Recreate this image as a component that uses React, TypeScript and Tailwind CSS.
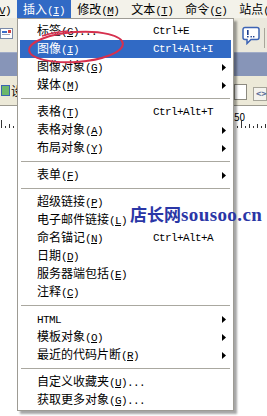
import { clsx } from "clsx";

type Entry =
    | { sep: true }
    | {
          sep?: false;
          zh?: string;
          latin?: string;
          k?: string;
          dots?: boolean;
          shortcut?: string;
          arrow?: boolean;
          active?: boolean;
      };

const entries: Entry[] = [
    { zh: "标签", k: "G", dots: true, shortcut: "Ctrl+E" },
    { zh: "图像", k: "I", shortcut: "Ctrl+Alt+I", active: true },
    { zh: "图像对象", k: "G", arrow: true },
    { zh: "媒体", k: "M", arrow: true },
    { sep: true },
    { zh: "表格", k: "T", shortcut: "Ctrl+Alt+T" },
    { zh: "表格对象", k: "A", arrow: true },
    { zh: "布局对象", k: "Y", arrow: true },
    { sep: true },
    { zh: "表单", k: "F", arrow: true },
    { sep: true },
    { zh: "超级链接", k: "P" },
    { zh: "电子邮件链接", k: "L" },
    { zh: "命名锚记", k: "N", shortcut: "Ctrl+Alt+A" },
    { zh: "日期", k: "D" },
    { zh: "服务器端包括", k: "E" },
    { zh: "注释", k: "C" },
    { sep: true },
    { latin: "HTML", arrow: true },
    { zh: "模板对象", k: "O", arrow: true },
    { zh: "最近的代码片断", k: "R", arrow: true },
    { sep: true },
    { zh: "自定义收藏夹", k: "U", dots: true },
    { zh: "获取更多对象", k: "G", dots: true },
];

// SimSun-like half-width latin: 6px per character
const mono = "font-['Liberation_Mono',monospace] text-[11px] tracking-[-0.6px]";

const menubar = [
    { zh: "查看", k: "V" },
    { zh: "插入", k: "I", active: true },
    { zh: "修改", k: "M" },
    { zh: "文本", k: "T" },
    { zh: "命令", k: "C" },
    { zh: "站点", k: "S" },
];

function Mnemonic({ k }: { k: string }) {
    return (
        <span className={mono}>
            (<u className="underline-offset-[1px]">{k}</u>)
        </span>
    );
}

function Ticks() {
    const ticks = [];
    for (let x = 1; x < 267; x += 4) {
        const i = Math.round((x - 1) / 4);
        const h = i % 10 === 0 ? 8 : i % 2 === 0 ? 4 : 2;
        ticks.push(<line key={x} x1={x + 0.5} x2={x + 0.5} y1={8 - h} y2={8} stroke="#333" strokeWidth="1" />);
    }
    return (
        <svg width="267" height="8" className="block">
            {ticks}
        </svg>
    );
}

export default function App() {
    return (
        <div className="relative h-[416px] w-[267px] overflow-hidden bg-white font-['Noto_Sans_CJK_SC',sans-serif] text-[12px] text-black">
            {/* Menu bar */}
            <div className="ml-[-37px] flex h-[18px] items-center bg-[#f3f2ea]">
                {menubar.map((m) => (
                    <div
                        key={m.zh}
                        className={clsx(
                            "flex h-[18px] items-baseline whitespace-nowrap px-[6px] leading-[18px]",
                            m.active ? "bg-[#316ac5] text-white" : "text-black"
                        )}
                    >
                        <span>{m.zh}</span>
                        <Mnemonic k={m.k} />
                    </div>
                ))}
            </div>

            {/* Toolbar */}
            <div className="flex h-[34px] items-start justify-between bg-[#ebe9dd] pt-[10px]">
                <svg width="13" height="11" className="ml-[0px]">
                    <rect x="0.5" y="0.5" width="12" height="10" fill="#fff" stroke="#7a8aa8" />
                    <rect x="2" y="3" width="5" height="2" fill="#3c6cc8" />
                    <rect x="8" y="2" width="3" height="3" fill="#d04040" />
                    <rect x="2" y="6" width="8" height="1" fill="#9aa6bd" />
                </svg>
                <div className="flex items-start">
                    <svg width="18" height="19" className="mt-[-2px]">
                        <path
                            d="M3 1.5h12a2 2 0 0 1 2 2v8a2 2 0 0 1-2 2h-6l-4 4v-4H3a2 2 0 0 1-2-2v-8a2 2 0 0 1 2-2z"
                            fill="#fff"
                            stroke="#3d64b4"
                            strokeWidth="1.5"
                        />
                        <rect x="5" y="4" width="1.6" height="5" fill="#1d3f8f" />
                        <rect x="5" y="10" width="1.6" height="1.4" fill="#1d3f8f" />
                        <rect x="8.5" y="10" width="1.4" height="1.4" fill="#1d3f8f" />
                        <rect x="11" y="10" width="1.4" height="1.4" fill="#1d3f8f" />
                    </svg>
                    <div className="ml-[4px] mr-[2px] h-[20px] w-px bg-[#a8a69a]" />
                </div>
            </div>

            {/* Panel band */}
            <div className="h-[24px] border-t border-[#a0acc8] bg-[#8795b8]" />

            {/* Document toolbar */}
            <div className="flex h-[30px] items-center justify-between border-b border-[#9c9a90] bg-[#ece9d8]">
                <div className="flex items-center">
                    <div className="ml-[1px] h-[11px] w-[9px] border border-[#3a66b0] bg-[#6cb86a]" />
                    <span className="ml-[1px]">设计</span>
                </div>
                <div className="flex items-center">
                    <div className="mt-[2px] h-[16px] w-[13px] border border-[#8c8a80] bg-white" />
                    <div className="ml-[6px] mt-[6px] flex h-[14px] w-[14px] items-center border border-[#a7a59a] bg-[#f4f3ee] pl-[2px] text-[9px] font-bold leading-none text-[#5b6e9a]">
                        &lt;&gt;
                    </div>
                </div>
            </div>

            {/* Ruler */}
            <div className="h-[22px] bg-white">
                <div className="flex h-[14px] justify-end pr-[22px] pt-[6px]">
                    <span className="text-[10px] leading-[10px]">50</span>
                </div>
                <Ticks />
            </div>

            {/* Insert menu */}
            <div className="absolute left-[17px] top-[18px] w-[217px] border border-[#9d9b94] bg-white px-[2px] pb-[1px] pt-[3px] shadow-[3px_3px_2px_rgba(0,0,0,0.35)]">
                {entries.map((e, i) =>
                    e.sep ? (
                        <div key={i} className="flex h-[9px] items-center px-[1px]">
                            <div className="h-px w-full bg-[#aaa8a0]" />
                        </div>
                    ) : (
                        <div
                            key={i}
                            className={clsx(
                                "flex h-[18px] items-center pl-[17px] pr-[5px]",
                                e.active ? "bg-[#316ac5] text-white" : "text-black"
                            )}
                        >
                            <div className="w-[116px] whitespace-nowrap leading-[18px]">
                                {e.latin ? (
                                    <span className={mono}>{e.latin}</span>
                                ) : (
                                    <>
                                        <span>{e.zh}</span>
                                        {e.k && <Mnemonic k={e.k} />}
                                        {e.dots && <span className={mono}>...</span>}
                                    </>
                                )}
                            </div>
                            <div className={clsx(mono, "flex-1 leading-[18px]")}>{e.shortcut}</div>
                            {e.arrow && (
                                <svg width="4" height="7" className="block">
                                    <path d="M0 0L4 3.5L0 7Z" fill="currentColor" />
                                </svg>
                            )}
                        </div>
                    )
                )}
            </div>

            {/* Red hand-drawn ellipse */}
            <svg className="absolute left-[24px] top-[27px]" width="106" height="42">
                <ellipse
                    cx="52"
                    cy="20"
                    rx="47"
                    ry="15"
                    transform="rotate(-4 52 20)"
                    fill="none"
                    stroke="#d6304e"
                    strokeWidth="2"
                />
                <path d="M18 9 Q30 5 44 4" fill="none" stroke="#d6304e" strokeWidth="1.5" />
            </svg>

            {/* Watermark */}
            <div className="absolute left-[130px] top-[203px] flex items-baseline whitespace-nowrap text-[#2a36a6]">
                <span className="text-[17px] font-bold leading-[22px]">店长网</span>
                <span className="font-['Liberation_Serif',serif] text-[19px] font-bold leading-[22px] tracking-[0.4px]">
                    sousoo.cn
                </span>
            </div>
        </div>
    );
}
